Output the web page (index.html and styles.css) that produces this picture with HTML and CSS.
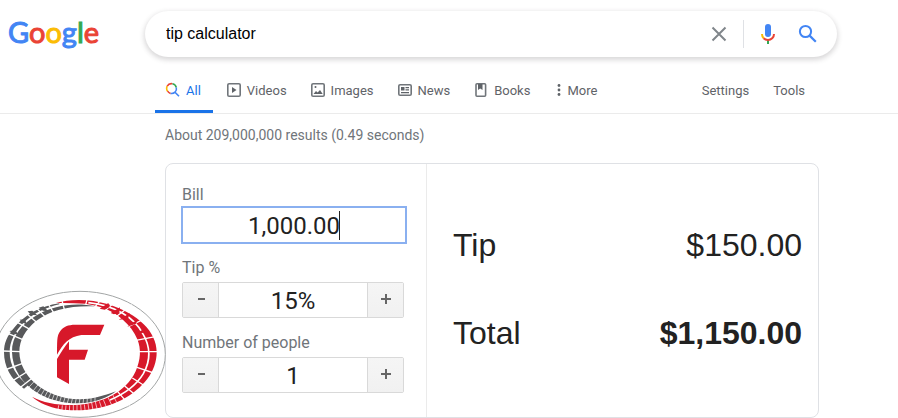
FILE: index.html
```html
<!DOCTYPE html>
<html lang="en">
<head>
    <meta charset="UTF-8">
    <meta name="viewport" content="width=device-width, initial-scale=1.0">
    <title>tip calculator - Google Search</title>
    <link rel="stylesheet" href="styles.css">
</head>
<body>
    <header class="header">
        <div class="search-row">
            <a class="logo" href="#" aria-label="Google"><span class="blue">G</span><span class="red">o</span><span class="yellow">o</span><span class="blue">g</span><span class="green">l</span><span class="red">e</span></a>
            <form class="search-box" role="search">
                <input class="search-input" type="text" value="tip calculator" aria-label="Search">
                <button class="icon-btn clear" type="button" aria-label="Clear">
                    <svg width="24" height="24" viewBox="0 0 24 24"><path d="M5.500 5.500l13 13M18.500 5.500l-13 13" stroke="#80868b" stroke-width="2" fill="none"/></svg>
                </button>
                <button class="icon-btn mic" type="button" aria-label="Search by voice">
                    <svg width="24" height="24" viewBox="0 0 24 24">
                        <rect x="9" y="2" width="6" height="13" rx="3" fill="#4285f4"/>
                        <path d="M11 18h2v4h-2z" fill="#34a853"/>
                        <path d="M6 12c0 1.700.6 3.200 1.700 4.200" stroke="#fbbc04" stroke-width="2" fill="none"/>
                        <path d="M7.600 16.200C8.700 17.400 10.200 18 12 18c3.300 0 6-2.500 6-6" stroke="#ea4335" stroke-width="2" fill="none"/>
                    </svg>
                </button>
                <button class="icon-btn" type="submit" aria-label="Google Search">
                    <svg width="24" height="24" viewBox="0 0 24 24"><circle cx="9.500" cy="9.500" r="5.600" stroke="#4285f4" stroke-width="2" fill="none"/><path d="M13.600 13.600l6.200 6.200" stroke="#4285f4" stroke-width="2.200"/></svg>
                </button>
            </form>
        </div>
        <nav class="tabs">
            <a class="tab active" href="#">
                <svg width="16" height="16" viewBox="0 0 16 16" fill="none" stroke-width="1.600">
                    <path d="M2.600 9.200A4.900 4.900 0 0 1 2.200 4.200" stroke="#fbbc04"/>
                    <path d="M2.200 4.200A4.900 4.900 0 0 1 7.500 1.800" stroke="#ea4335"/>
                    <path d="M7.500 1.800A4.900 4.900 0 0 1 11.300 5.500" stroke="#34a853"/>
                    <path d="M11.300 5.500A4.900 4.900 0 0 1 10 10.200l4 4" stroke="#4285f4"/>
                    <path d="M10 10.200A4.900 4.900 0 0 1 5.500 11.400" stroke="#4285f4"/>
                    <path d="M5.500 11.400A4.900 4.900 0 0 1 2.600 9.200" stroke="#ea4335"/>
                </svg>
                All
            </a>
            <a class="tab" href="#">
                <svg width="16" height="16" viewBox="0 0 16 16"><rect x="1.800" y="1.800" width="12.400" height="12.400" rx="1.300" fill="none" stroke="#70757a" stroke-width="1.600"/><path d="M6 5v6l4.500-3z" fill="#5f6368"/></svg>
                Videos
            </a>
            <a class="tab" href="#">
                <svg width="16" height="16" viewBox="0 0 16 16"><rect x="1.800" y="1.800" width="12.400" height="12.400" rx="1.300" fill="none" stroke="#70757a" stroke-width="1.600"/><path d="M3.500 12l2.500-3 1.600 1.600L10 8l2.700 4z" fill="#5f6368"/><circle cx="5.500" cy="5" r="1" fill="#5f6368"/></svg>
                Images
            </a>
            <a class="tab" href="#">
                <svg width="16" height="16" viewBox="0 0 16 16"><rect x="1.800" y="2.800" width="12.400" height="10.400" rx="1.300" fill="none" stroke="#70757a" stroke-width="1.600"/><path d="M4 5h3.500v3.500H4zM8.500 5H12v1.200H8.500zM8.500 7.300H12v1.200H8.500zM4 10h8v1.200H4z" fill="#5f6368"/></svg>
                News
            </a>
            <a class="tab" href="#">
                <svg width="16" height="16" viewBox="0 0 16 16"><rect x="3" y="1.800" width="9.600" height="12.400" rx="1" fill="none" stroke="#70757a" stroke-width="1.600"/><path d="M5 2h4.500v6L7.200 6.500 5 8z" fill="#5f6368"/></svg>
                Books
            </a>
            <a class="tab more" href="#">
                <svg width="4" height="16" viewBox="0 0 4 16" fill="#5f6368"><circle cx="2" cy="3.500" r="1.400"/><circle cx="2" cy="8" r="1.400"/><circle cx="2" cy="12.500" r="1.400"/></svg>
                More
            </a>
            <div class="tools">
                <a class="tab" href="#">Settings</a>
                <a class="tab" href="#">Tools</a>
            </div>
        </nav>
    </header>

    <main class="results">
        <p class="result-stats">About 209,000,000 results (0.49 seconds)</p>
        <section class="calculator">
            <form class="calc-form">
                <label class="field-label" for="bill">Bill</label>
                <input class="bill-input" id="bill" type="text" value="1,000.00">

                <label class="field-label" for="tip">Tip %</label>
                <div class="stepper">
                    <button class="step-btn" type="button" aria-label="Decrease tip"><svg width="10" height="10" viewBox="0 0 10 10"><path d="M2 5h7" stroke="#666" stroke-width="2"/></svg></button>
                    <input class="step-input" id="tip" type="text" value="15%">
                    <button class="step-btn" type="button" aria-label="Increase tip"><svg width="10" height="10" viewBox="0 0 10 10"><path d="M0 5h10M5 0v10" stroke="#666" stroke-width="2"/></svg></button>
                </div>

                <label class="field-label" for="people">Number of people</label>
                <div class="stepper">
                    <button class="step-btn" type="button" aria-label="Fewer people"><svg width="10" height="10" viewBox="0 0 10 10"><path d="M2 5h7" stroke="#666" stroke-width="2"/></svg></button>
                    <input class="step-input" id="people" type="text" value="1">
                    <button class="step-btn" type="button" aria-label="More people"><svg width="10" height="10" viewBox="0 0 10 10"><path d="M0 5h10M5 0v10" stroke="#666" stroke-width="2"/></svg></button>
                </div>
            </form>
            <div class="calc-output">
                <div class="output-row"><span>Tip</span><span>$150.00</span></div>
                <div class="output-row"><span>Total</span><strong>$1,150.00</strong></div>
            </div>
        </section>
    </main>

    <!-- tyre track emblem over the bottom left corner -->
    <svg class="emblem" width="172" height="128" viewBox="-18 30 516 384" fill="none" aria-hidden="true">
        <ellipse cx="240" cy="223" rx="256" ry="189" fill="#fff" stroke="#a3a6a6" stroke-width="3"/>
        <g fill="#58595b">
            <path d="M178 70C120 78 75 105 45 140C20 168 12 190 12 216C12 260 32 298 72 326L84 316C50 288 29 258 29 216C29 185 44 155 72 127C102 99 137 83 178 73Z"/>
            <path d="M285 79C225 67 160 76 110 106C65 132 35 170 36 216C37 265 65 312 118 342C160 366 220 376 275 366C305 359 330 348 348 334C310 348 275 358 240 358C185 357 142 340 107 311C77 287 59 252 58 216C58 179 77 150 107 124C152 88 215 76 285 79Z"/>
        </g>
        <g fill="#d7182a">
            <path d="M168 69C210 56 270 56 325 73C415 102 470 156 470 216C470 275 430 325 365 360C300 393 200 403 135 374Q110 363 96 350C135 371 185 378 240 374C310 367 370 337 405 290C433 248 430 190 400 148C365 103 315 79 255 71Q210 68 168 69Z"/>
            <path d="M290 72C350 84 405 120 430 163C449 200 447 249 425 286C400 328 355 353 315 365L330 350C365 332 392 307 407 274C422 240 424 207 412 178C395 135 350 95 290 72Z"/>
            <path d="M171 224C172 190 169 167 181 153C190 140 204 134 226 134H313L300 165H244C207 170 188 193 171 224Z"/>
            <path d="M171 237C184 217 194 199 207 184V209H264L254 239H207V312L171 292Z"/>
        </g>
        <g stroke="#fff" stroke-width="4">
            <path stroke-width="5" d="M265 68C345 76 402 112 428 160C452 200 453 240 430 281C408 318 375 341 330 360"/>
            <path d="M8 213L62 215M14 270L68 250M35 304L80 276M54 328L98 293M18 158L74 181M43 122L91 149M72 94L113 130M105 80L137 112M142 68L161 98M185 58L193 88"/>
            <path d="M416 215H476M404 182L466 170M380 142L439 114M350 109L396 74M317 90L351 61M286 79L306 56M257 74L262 56M411 262L470 282M397 294L449 327M374 318L420 356M353 335L389 376"/>
        </g>
        <g stroke="#fff" stroke-width="2">
            <path d="M75 334L104 303M90 344L116 312M104 350L125 320M117 356L134 328M129 360L144 332M141 364L154 336M153 368L164 340M165 370L174 344M177 371L185 347M189 372L196 350M201 372L207 352M213 373L218 353M225 373L229 354M237 373L240 354M249 372L251 354M261 372L262 352M273 370V350M285 366V346"/>
            <path d="M176 376L173 396M187 376L185 398M198 376L196 398M209 376L208 398M220 375V400M231 375V400M242 374L244 400M253 373L256 398M264 371L268 397M275 368L280 396M286 366L293 393M298 364L307 390M310 359L321 386M324 352L338 381M338 344L355 377"/>
        </g>
        <g fill="#58595b"><path d="M28 153L45 151L57 164L43 162ZM59 119L75 118L80 132L69 129ZM83 94L97 92L112 106L92 104ZM116 83L130 79L145 94L129 92Z"/></g>
        <g fill="#d7182a"><path d="M325 69L329 81L314 89L299 86ZM360 82L358 97L342 103L332 99ZM389 99L384 116L356 119L371 111ZM413 120L408 131L382 140L394 130ZM437 145L435 158L413 160L421 153Z"/></g>
    </svg>
</body>
</html>
```
FILE: styles.css
```css
* {
    box-sizing: border-box;
}

body {
    margin: 0;
    background: #fff;
    color: #222;
    font-family: Roboto, "Liberation Sans", sans-serif;
}

a {
    text-decoration: none;
}

input,
button {
    margin: 0;
    padding: 0;
    font-family: inherit;
}

input:focus {
    outline: none;
}

.header {
    border-bottom: 1px solid #ebebeb;
}

.search-row {
    display: flex;
    padding: 11px 61px 0 8px;
}

.logo {
    width: 137px;
    flex-shrink: 0;
    font-family: Lato, sans-serif;
    font-size: 29px;
    line-height: 42px;
    -webkit-text-stroke: 1px;
}

.blue { color: #4285f4; }
.red { color: #ea4335; }
.yellow { color: #fbbc05; }
.green { color: #34a853; }

.search-box {
    display: flex;
    align-items: center;
    flex: 1;
    max-width: 692px;
    height: 46px;
    padding: 0 17px 0 21px;
    border-radius: 24px;
    box-shadow: 0 2px 5px 1px rgba(64, 60, 67, 0.2);
}

.search-input {
    flex: 1;
    min-width: 0;
    border: none;
    background: transparent;
    color: #000;
    font-family: "Liberation Sans", Arial, sans-serif;
    font-size: 16px;
}

.icon-btn {
    display: flex;
    border: none;
    background: transparent;
    cursor: pointer;
}

.clear {
    margin-right: 12px;
}

.mic {
    height: 28px;
    padding: 2px 16px 0 12px;
    border-left: 1px solid #dfe1e5;
}

.tabs {
    display: flex;
    gap: 3px;
    max-width: 815px;
    margin-top: 10px;
    padding-left: 155px;
}

.tab {
    display: flex;
    align-items: center;
    gap: 5px;
    height: 46px;
    padding: 3px 10px 0;
    border-bottom: 3px solid transparent;
    color: #5f6368;
    font-size: 13px;
    white-space: nowrap;
}

.tab.active {
    padding-right: 12px;
    border-bottom-color: #1a73e8;
    color: #1a73e8;
}

.tab.more {
    gap: 6px;
    padding-left: 14px;
}

.tools {
    display: flex;
    gap: 4px;
    margin-left: auto;
}

.results {
    padding: 0 16px 0 165px;
}

.result-stats {
    margin: 0;
    padding: 12px 0 18px;
    color: #70757a;
    font-size: 14px;
    line-height: 19px;
}

.calculator {
    display: flex;
    max-width: 654px;
    border: 1px solid #dfe1e5;
    border-radius: 8px;
}

.calc-form {
    width: 261px;
    padding: 20px 19px 24px 15px;
    border-right: 1px solid #ebebeb;
}

.field-label {
    display: block;
    padding-left: 1px;
    color: #70757a;
    font-size: 16px;
    line-height: 22px;
}

/* the 1px background is the text caret */
.bill-input {
    display: block;
    width: 100%;
    height: 38px;
    margin-bottom: 13px;
    padding-top: 2px;
    border: 2px solid #8ab0f0;
    background: linear-gradient(#222, #222) no-repeat calc(50% + 45px) center / 1px 29px;
    color: #222;
    font-size: 24px;
    text-align: center;
}

.stepper {
    display: flex;
    height: 36px;
    margin: 3px 3px 14px 1px;
    border: 1px solid #d9d9d9;
    border-radius: 2px;
}

.stepper:last-child {
    margin-bottom: 0;
}

.step-btn {
    display: flex;
    align-items: center;
    justify-content: center;
    width: 35px;
    padding-bottom: 3px;
    border: none;
    background: linear-gradient(#f5f5f5, #f1f1f1);
    cursor: pointer;
}

.step-input {
    flex: 1;
    min-width: 0;
    padding-top: 2px;
    border: 1px solid #d9d9d9;
    border-width: 0 1px;
    color: #222;
    font-size: 24px;
    text-align: center;
}

.calc-output {
    display: flex;
    flex: 1;
    flex-direction: column;
    justify-content: center;
    gap: 52px;
    padding: 0 16px 4px 26px;
    font-family: "Liberation Sans", Arial, sans-serif;
    font-size: 32px;
    line-height: 36px;
}

.output-row {
    display: flex;
    justify-content: space-between;
}

.emblem {
    position: absolute;
    top: 290px;
    left: -6px;
}
```
